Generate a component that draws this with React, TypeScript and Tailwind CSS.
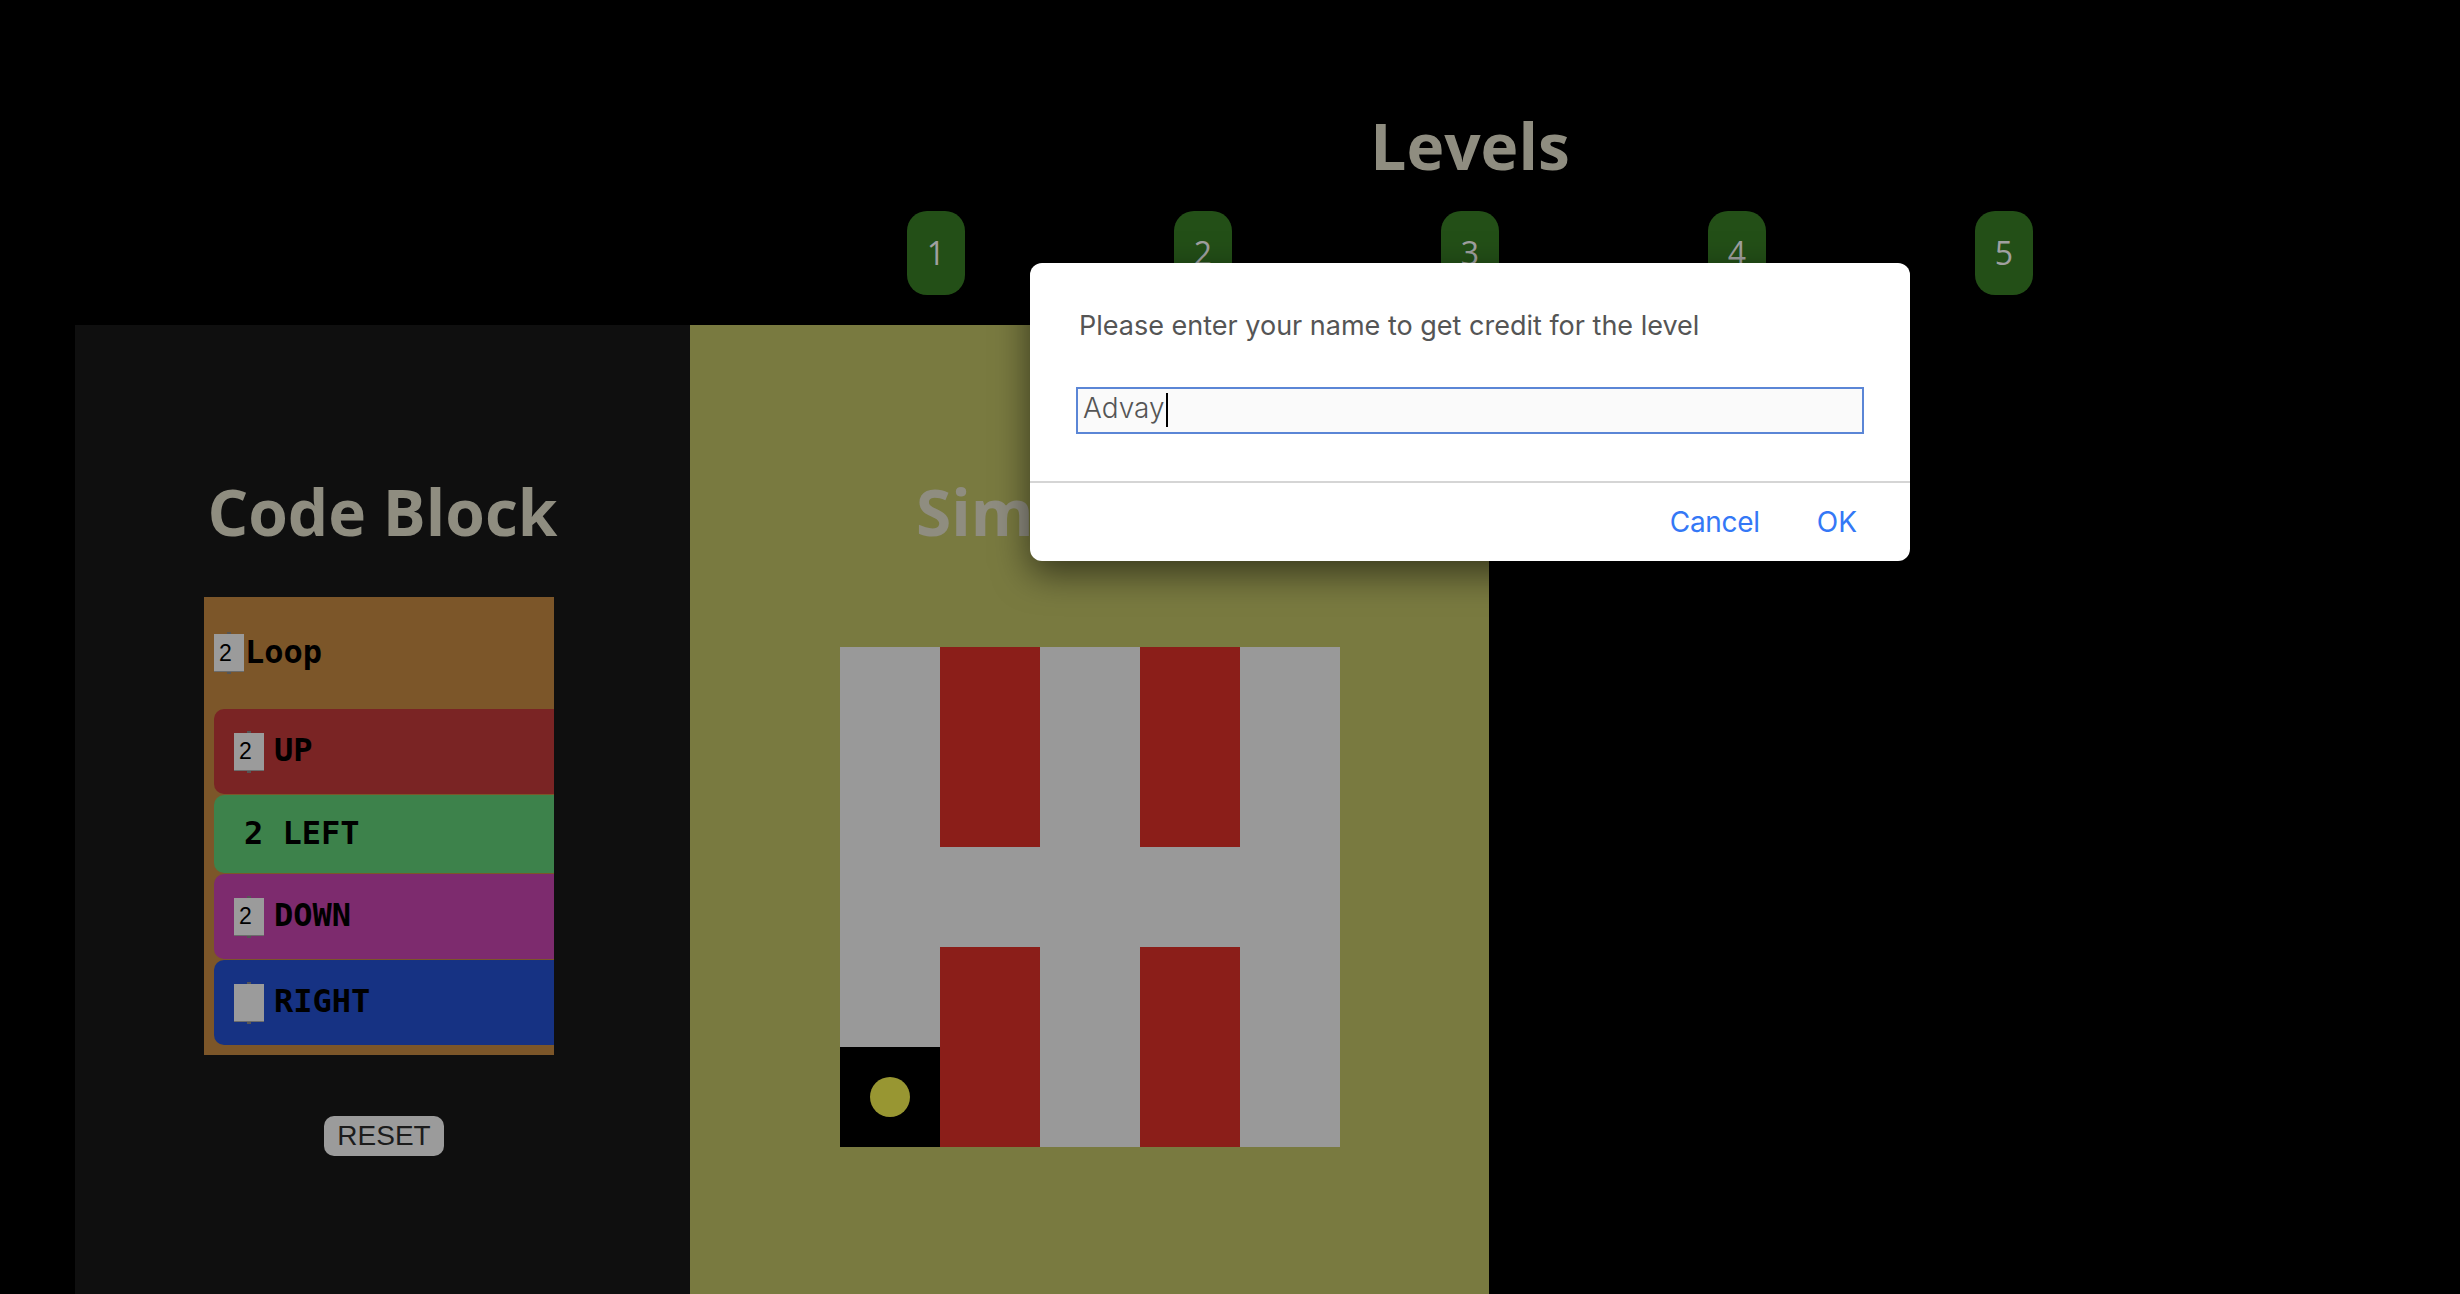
import React from "react";

const levels = [1, 2, 3, 4, 5];

// 5x5 maze: g = path, r = wall, b = start cell with the ball
const maze = [
  ["g", "r", "g", "r", "g"],
  ["g", "r", "g", "r", "g"],
  ["g", "g", "g", "g", "g"],
  ["g", "r", "g", "r", "g"],
  ["b", "r", "g", "r", "g"],
];

function NumBox({ value }: { value?: string }) {
  return (
    <div className="relative flex h-[38px] w-[30px] shrink-0 items-center bg-[#9b9b9b] pl-[5px] font-['Liberation_Sans',sans-serif] text-[23px] font-normal leading-none text-black shadow-[inset_0_-1px_0_#6b6b6b]">
      {value}
      <span className="absolute left-[13px] top-[-2px] h-[2px] w-[4px] bg-[#555]" />
      <span className="absolute bottom-[-2px] left-[13px] h-[2px] w-[4px] bg-[#555]" />
    </div>
  );
}

function Block({
  color,
  label,
  value,
  plain,
}: {
  color: string;
  label: string;
  value?: string;
  plain?: boolean;
}) {
  return (
    <div
      className={`flex items-center rounded-l-[10px] ${color} ${
        plain ? "h-[78px] pl-[30px]" : "h-[85px] pl-[20px]"
      }`}
    >
      {plain ? (
        <span className="-mt-[2px]">2 {label}</span>
      ) : (
        <>
          <NumBox value={value} />
          <span className="-mt-[4px] ml-[10px]">{label}</span>
        </>
      )}
    </div>
  );
}

export default function App() {
  return (
    <div className="relative flex h-[1294px] flex-col overflow-hidden bg-black">
      <section className="pl-[480px] pt-[102px] text-center">
        <h1 className="font-['Open_Sans',sans-serif] text-[64px] font-bold leading-[87px] text-[#8f8d80]">
          Levels
        </h1>
        <div className="mt-[22px] flex justify-center gap-[209px]">
          {levels.map((n) => (
            <button
              key={n}
              className="flex h-[84px] w-[58px] items-center justify-center rounded-[20px] bg-[#234f17] font-['Open_Sans',sans-serif] text-[32px] text-[#a0a0a0]"
            >
              {n}
            </button>
          ))}
        </div>
      </section>

      <div className="mt-[30px] flex flex-1 pl-[75px]">
        {/* code block panel */}
        <div className="w-[615px] bg-[#0f0f0f] pt-[143px]">
          <h2 className="text-center font-['Open_Sans',sans-serif] text-[64px] font-bold leading-[87px] text-[#8f8d80]">
            Code Block
          </h2>
          <div className="ml-[129px] mt-[42px] w-[350px] overflow-hidden bg-[#7c5629] pb-[10px] pl-[10px] font-['DejaVu_Sans_Mono',monospace] text-[32px] font-bold text-black">
            <div className="flex h-[112px] items-center">
              <NumBox value="2" />
              <span className="-mt-[2px] ml-px">Loop</span>
            </div>
            <div className="flex flex-col gap-px">
              <Block color="bg-[#7a2424]" label="UP" value="2" />
              <Block color="bg-[#3d824b]" label="LEFT" plain />
              <Block color="bg-[#7d2b6e]" label="DOWN" value="2" />
              <Block color="bg-[#163283]" label="RIGHT" />
            </div>
          </div>
          <div className="mt-[61px] flex justify-center pl-[3px]">
            <button className="h-[40px] w-[120px] rounded-[10px] bg-[#9b9b9b] font-['Liberation_Sans',sans-serif] text-[28px] leading-[40px] text-[#1c1c1c]">
              RESET
            </button>
          </div>
        </div>

        {/* simulator panel */}
        <div className="w-[799px] bg-[#797a40] pt-[143px]">
          <h2 className="text-center font-['Open_Sans',sans-serif] text-[64px] font-bold leading-[87px] text-[#8f8d80]">
            Simulation
          </h2>
          <div className="mx-auto mt-[92px] grid w-[500px] grid-cols-5">
            {maze.flat().map((c, i) => (
              <div
                key={i}
                className={`flex h-[100px] items-center justify-center ${
                  c === "r" ? "bg-[#8b1e19]" : c === "b" ? "bg-black" : "bg-[#999999]"
                }`}
              >
                {c === "b" && <div className="h-[40px] w-[40px] rounded-full bg-[#989632]" />}
              </div>
            ))}
          </div>
        </div>
      </div>

      {/* prompt dialog */}
      <div className="absolute left-[1030px] top-[263px] w-[880px] rounded-[12px] bg-white font-['Inter',sans-serif] shadow-[0_12px_36px_rgba(0,0,0,0.55)]">
        <p className="px-[49px] pt-[47px] text-[27px] leading-[32px] text-[#555555]">
          Please enter your name to get credit for the level
        </p>
        <div className="mx-[46px] mt-[45px] flex h-[47px] items-center border-2 border-[#5b86d6] bg-[#fafafa] pb-[5px] pl-[5px] text-[28px] font-light text-[#555555]">
          Advay
          <span className="ml-px mt-[4px] inline-block h-[34px] w-[2px] bg-black" />
        </div>
        <div className="mt-[47px] h-[2px] bg-[#d5d5d5]" />
        <div className="flex h-[78px] items-center justify-end gap-[57px] pr-[53px] text-[28px] text-[#3478f6]">
          <button className="tracking-[-0.3px]">Cancel</button>
          <button>OK</button>
        </div>
      </div>
    </div>
  );
}
